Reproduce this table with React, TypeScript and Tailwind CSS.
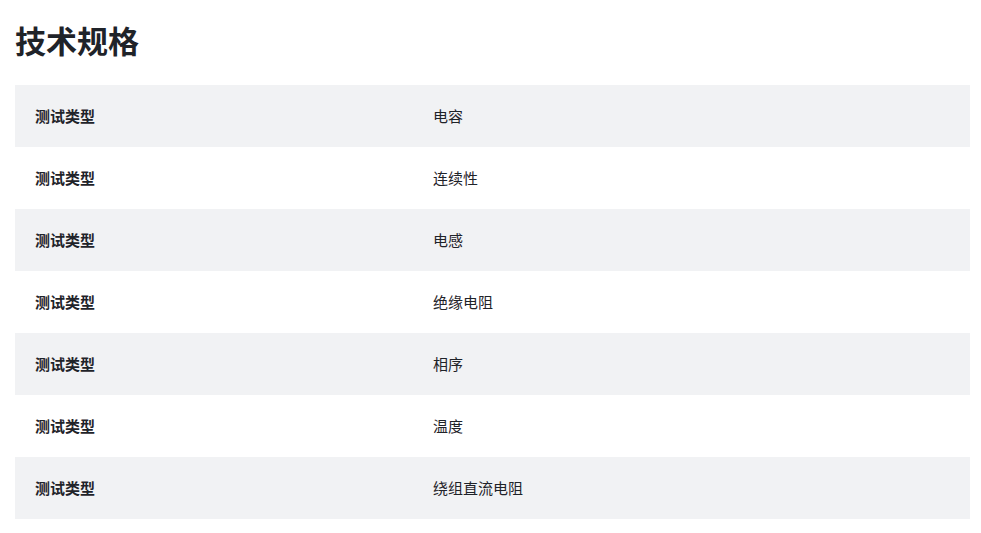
const rows = ['电容', '连续性', '电感', '绝缘电阻', '相序', '温度', '绕组直流电阻']

export default function App() {
  return (
    <div
      className="min-h-screen bg-white pl-[15px] pr-[11px] pt-[21px] text-[#1f2329]"
      style={{ fontFamily: '"Noto Sans CJK SC", "Noto Sans", sans-serif' }}
    >
      <h1 className="text-[31px] font-bold leading-[38px] mb-[26px]">技术规格</h1>
      <table className="w-full border-collapse text-[15px]">
        <tbody>
          {rows.map((v, i) => (
            <tr key={v} className={i % 2 === 0 ? 'bg-[#f1f2f4]' : 'bg-white'}>
              <td className="h-[62px] w-[398px] px-5 font-bold">测试类型</td>
              <td className="h-[62px] px-5">{v}</td>
            </tr>
          ))}
        </tbody>
      </table>
    </div>
  )
}
